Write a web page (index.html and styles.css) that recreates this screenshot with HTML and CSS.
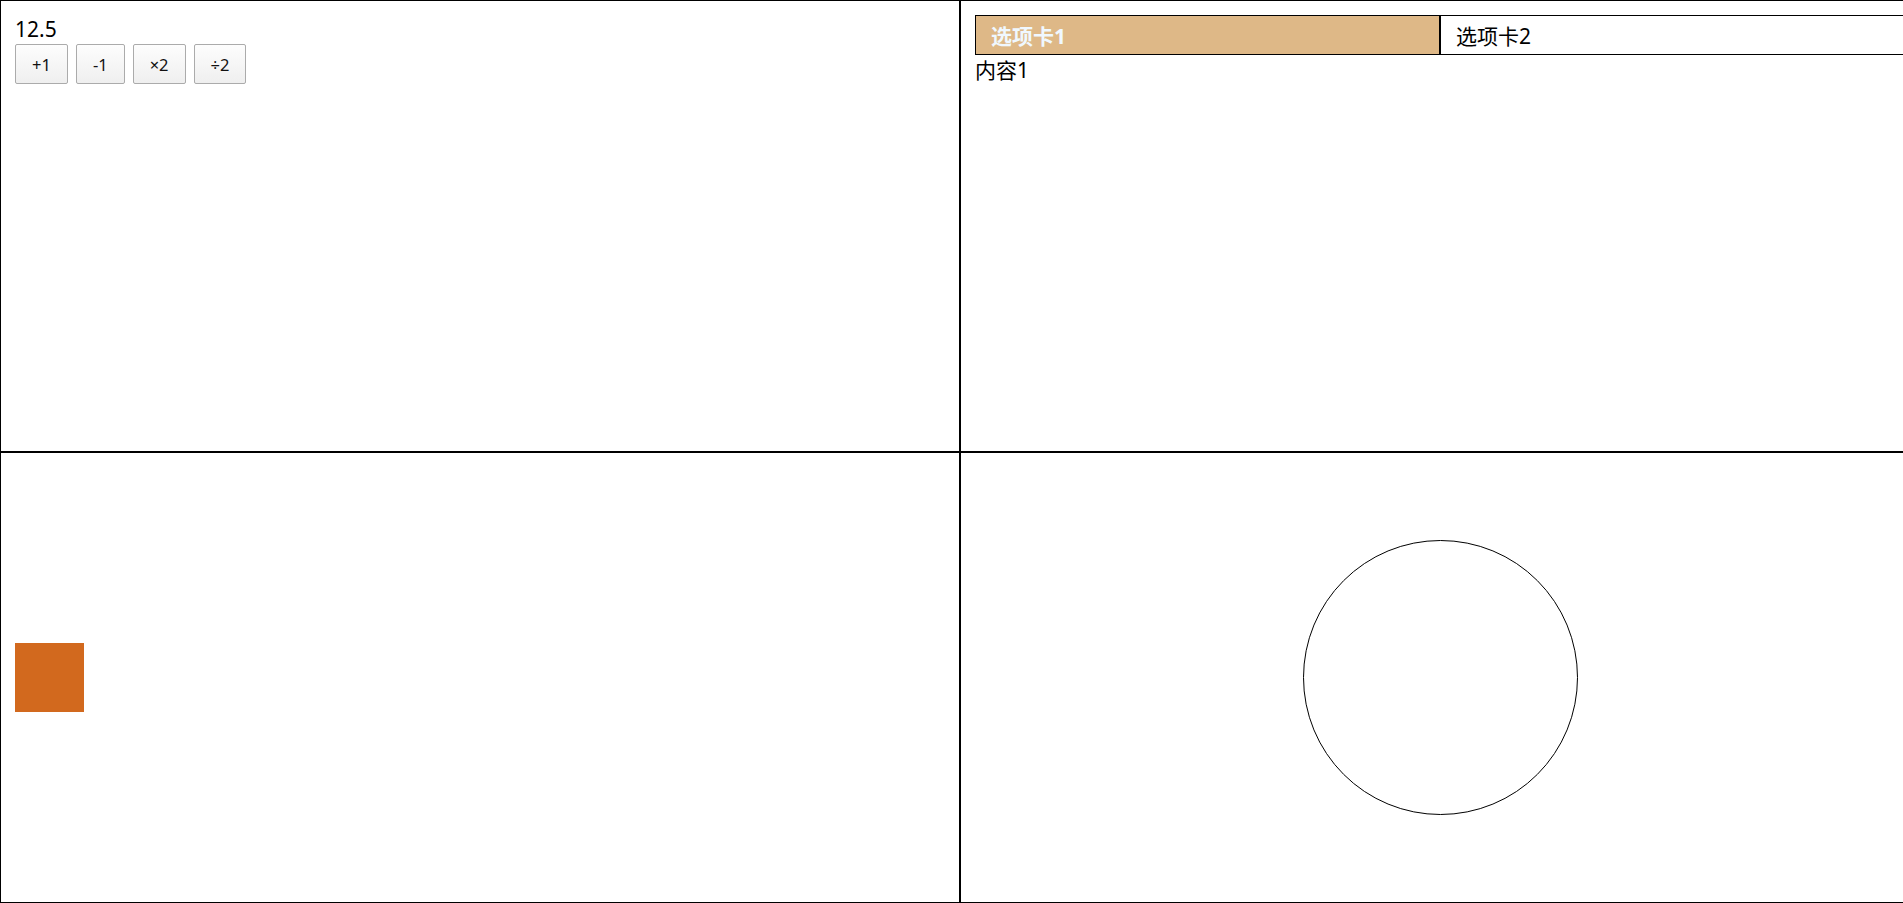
FILE: index.html
```html
<!DOCTYPE html>
<html lang="zh-CN">
<head>
<meta charset="utf-8">
<title>Demo</title>
<link rel="stylesheet" href="styles.css">
</head>
<body>
<div class="grid">
  <section class="cell calc">
    <div class="value">12.5</div>
    <div class="btns">
      <button class="btn">+1</button>
      <button class="btn">-1</button>
      <button class="btn">×2</button>
      <button class="btn">÷2</button>
    </div>
  </section>
  <section class="cell tabs-cell">
    <div class="tabs">
      <div class="tab active">选项卡1</div>
      <div class="tab">选项卡2</div>
    </div>
    <div class="tab-content">内容1</div>
  </section>
  <section class="cell box-cell">
    <div class="box"></div>
  </section>
  <section class="cell circle-cell">
    <div class="circle"></div>
  </section>
</div>
</body>
</html>
```

FILE: styles.css
```css
html, body {
  margin: 0;
  padding: 0;
  overflow: hidden;
  background: #fff;
}
body {
  font-family: "Noto Sans", "Noto Sans CJK SC", sans-serif;
  color: #000;
}
.grid {
  display: grid;
  grid-template-columns: 960px 960px;
  grid-template-rows: 50vh 50vh;
  width: 1920px;
  height: 100vh;
}
.cell {
  box-sizing: border-box;
  border: 1px solid #000;
  padding: 14px;
  overflow: hidden;
}
.value {
  font-size: 21px;
  line-height: 29px;
}
.btns {
  display: flex;
  gap: 8px;
}
.btn {
  box-sizing: border-box;
  height: 40px;
  padding: 0 16px;
  font-family: "Noto Sans", sans-serif;
  font-size: 16.5px;
  color: #111;
  background: linear-gradient(#fdfdfd, #efefef);
  border: 1px solid #ababab;
  border-radius: 2px;
}
.tabs {
  display: flex;
}
.tab {
  flex: 1;
  box-sizing: border-box;
  height: 40px;
  border: 1px solid #000;
  padding: 0 15px;
  display: flex;
  align-items: center;
  font-size: 21px;
  font-family: "Noto Sans", "Noto Sans CJK SC", sans-serif;
}
.tab.active {
  background: #deb887;
  color: #f0f8ff;
  font-weight: bold;
}
.tab-content {
  font-size: 21px;
  line-height: 30px;
}
.box-cell {
  display: flex;
  align-items: center;
}
.box {
  width: 69px;
  height: 69px;
  background: #d2691e;
}
.circle-cell {
  display: flex;
  align-items: center;
  justify-content: center;
}
.circle {
  width: 273px;
  height: 273px;
  border: 1px solid #000;
  border-radius: 50%;
}
```
